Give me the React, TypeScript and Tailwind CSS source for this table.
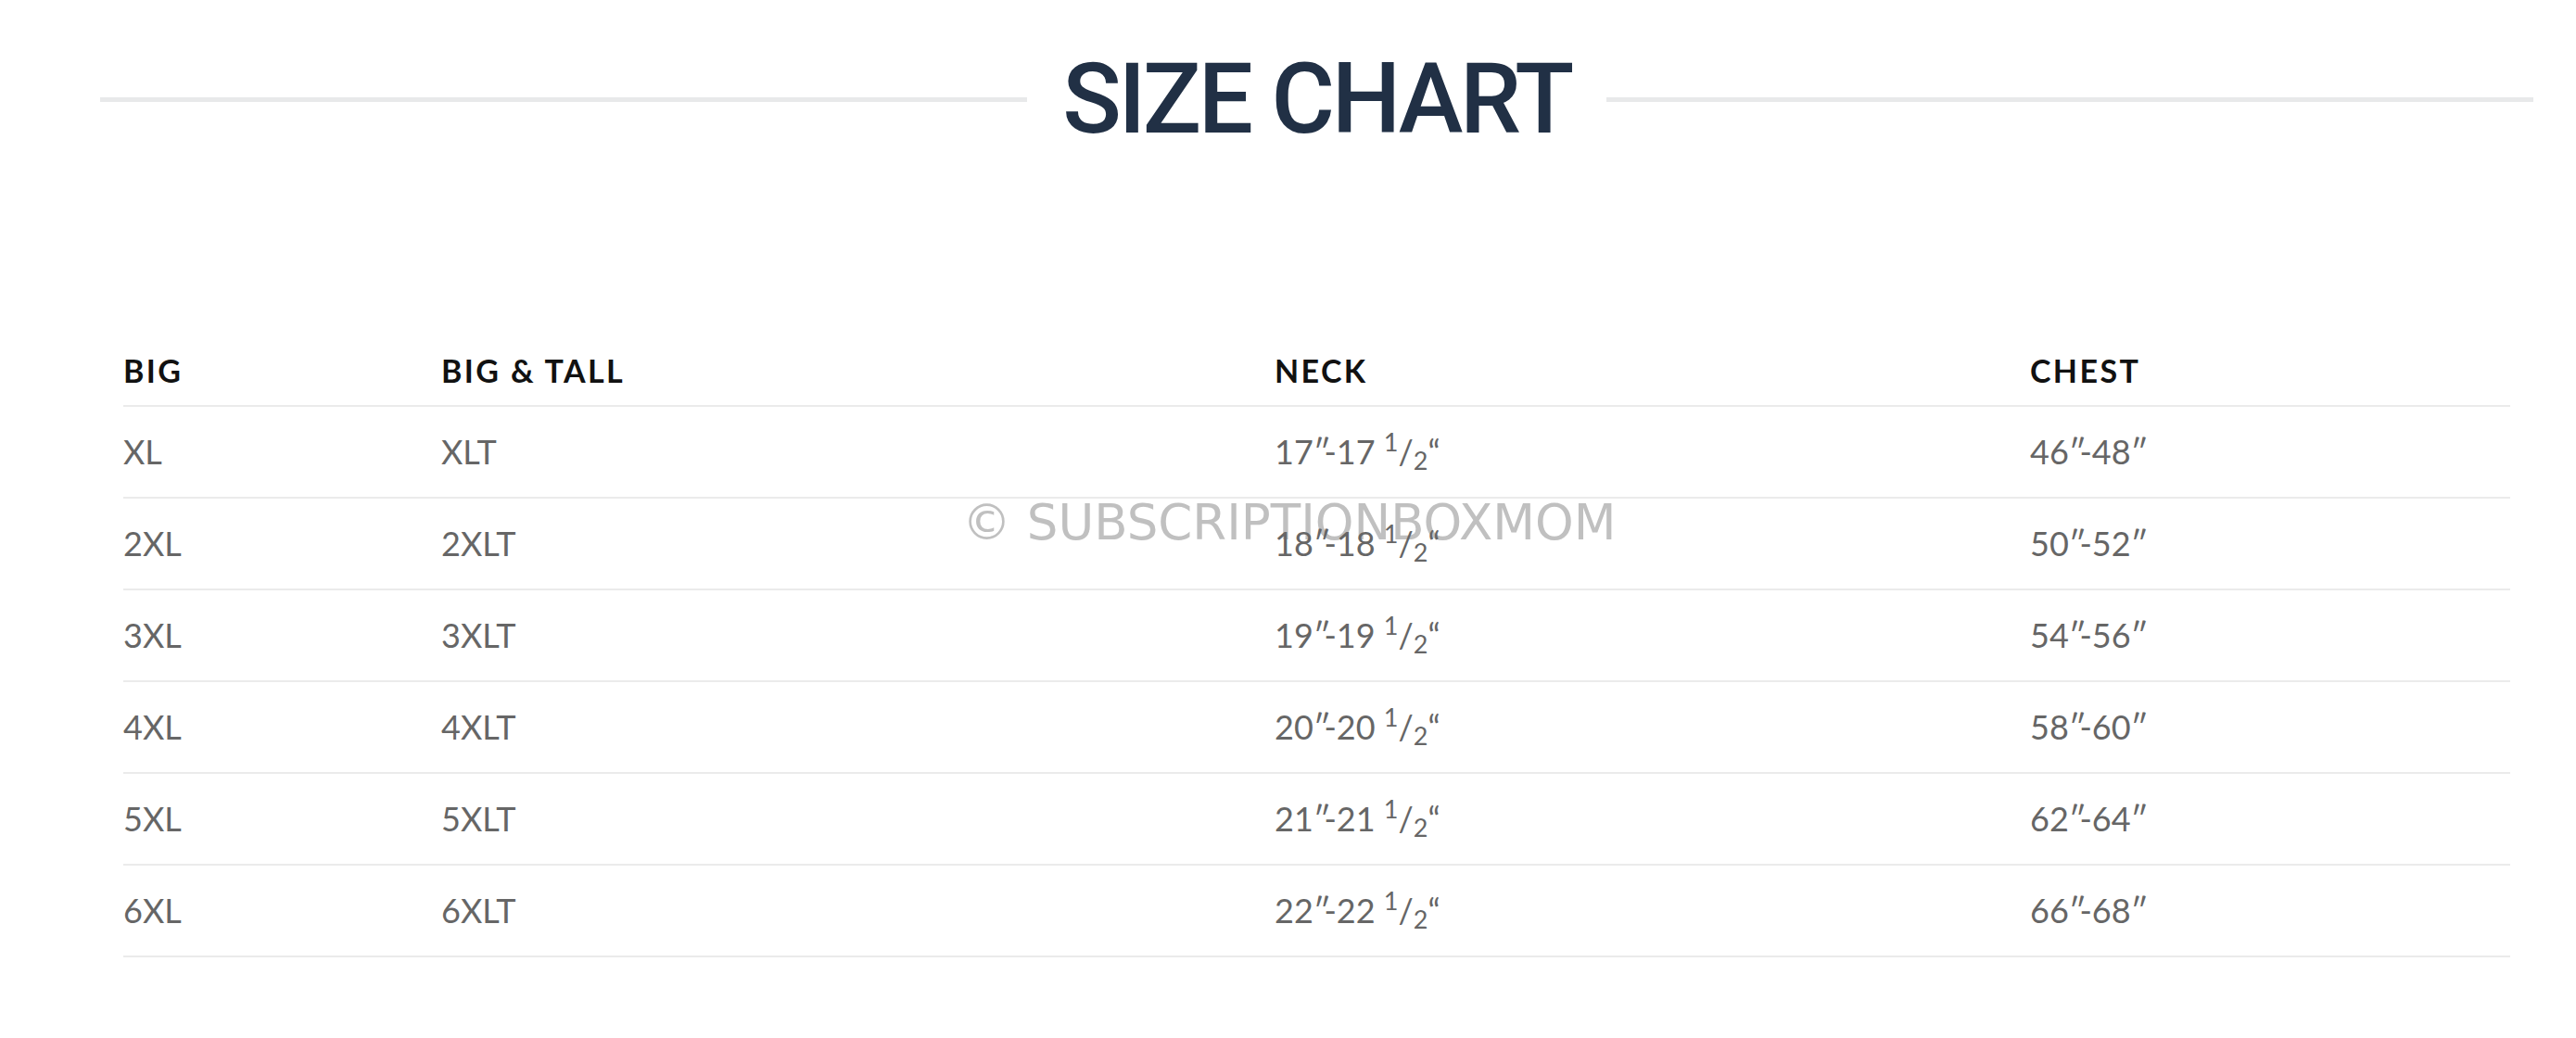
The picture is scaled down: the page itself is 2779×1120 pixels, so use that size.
const rows = [
  { big: 'XL', tall: 'XLT', from: '17', to: '17', chest: ['46', '48'] },
  { big: '2XL', tall: '2XLT', from: '18', to: '18', chest: ['50', '52'] },
  { big: '3XL', tall: '3XLT', from: '19', to: '19', chest: ['54', '56'] },
  { big: '4XL', tall: '4XLT', from: '20', to: '20', chest: ['58', '60'] },
  { big: '5XL', tall: '5XLT', from: '21', to: '21', chest: ['62', '64'] },
  { big: '6XL', tall: '6XLT', from: '22', to: '22', chest: ['66', '68'] },
];

const cols = 'grid grid-cols-[343px_899px_815px_1fr]';

// Lato's double prime runs wide, pull the next glyph back in
const Prime = () => <span className="tracking-[-0.2em]">″</span>;

export default function App() {
  return (
    <div className="relative min-h-[1120px] w-full bg-white pl-[108px] pr-[46px] pt-[55px]">
      {/* heading with rules either side */}
      <div className="flex items-center">
        <div className="h-[5px] flex-1 bg-[#e8e9ea]" />
        <h1 className="mx-[38px] font-['Roboto',sans-serif] text-[105px] font-medium leading-none tracking-[-0.032em] text-[#213045]">
          SIZE CHART
        </h1>
        <div className="h-[5px] flex-1 bg-[#e8e9ea]" />
      </div>

      <div className="relative z-10 mx-[25px] mt-[220px] font-['Lato',sans-serif]">
        <div className={`${cols} border-b-2 border-[#ebebeb] pb-[16px] text-[34px] font-bold leading-[1.2] tracking-[0.07em] text-[#111]`}>
          <div>BIG</div>
          <div>BIG &amp; TALL</div>
          <div>NECK</div>
          <div>CHEST</div>
        </div>
        {rows.map((r) => (
          <div
            key={r.big}
            className={`${cols} h-[99px] items-center border-b-2 border-[#ebebeb] text-[36px] leading-[1.2] text-[#666]`}
          >
            <div>{r.big}</div>
            <div>{r.tall}</div>
            <div>
              {r.from}
              <Prime />-{r.to} <sup>1</sup>/<sub>2</sub>“
            </div>
            <div>
              {r.chest[0]}
              <Prime />-{r.chest[1]}
              <Prime />
            </div>
          </div>
        ))}
      </div>

      {/* watermark */}
      <span className="pointer-events-none absolute left-[1038px] top-[537px] z-0 whitespace-nowrap font-['DejaVu_Sans',sans-serif] text-[53px] leading-none text-[#c0c0c0]">
        © SUBSCRIPTIONBOXMOM
      </span>
    </div>
  );
}
